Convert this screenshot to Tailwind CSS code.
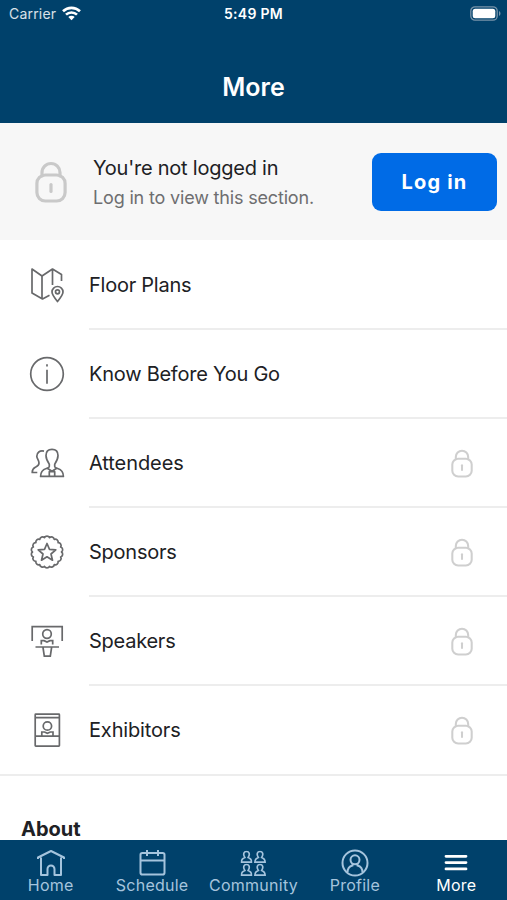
<!DOCTYPE html>
<html lang="en">
<head>
<meta charset="utf-8">
<title>More</title>
<script src="https://cdn.jsdelivr.net/npm/@tailwindcss/browser@4"></script>
</head>
<body class="w-[507px] h-[900px] overflow-hidden bg-white font-[Inter,sans-serif] text-[#202124]">
<svg class="hidden">
  <symbol id="lock" viewBox="0 0 32 42"><path d="M7 15v-3.500a9 9 0 0 1 18 0v3.500" /><rect x="1.900" y="14" width="28.200" height="26" rx="8.500"/><path d="M16 23.500v7"/></symbol>
  <symbol id="member" viewBox="0 0 12 13"><path d="M4.300 7C2 3.600 3.400 1 6 1s4 2.600 1.700 6c2.200.8 3.400 1.800 3.400 4.700H.9C.9 8.800 2.100 7.800 4.300 7z"/></symbol>
</svg>
<div class="flex h-full flex-col">
  <header class="h-[123px] shrink-0 bg-[#00416b] text-white">
    <div class="grid h-7 grid-cols-3 items-center">
      <div class="flex items-center pl-[9px]">
        <span class="-mt-px text-[14px] tracking-[0.2px] text-white/85">Carrier</span>
        <svg class="ml-1.5 -mt-0.5 h-[15px] w-[19px]" viewBox="0 0 19 15" fill="none" stroke="white" stroke-width="2.6"><path d="M1 5.300a12.200 12.200 0 0 1 17 0M4 8.700a7.800 7.800 0 0 1 11 0"/><path d="M9.500 14.300 6.300 11a4.600 4.600 0 0 1 6.400 0z" fill="white" stroke="none"/></svg>
      </div>
      <div class="-mt-px text-center text-[14px] font-semibold tracking-[0.3px]">5:49 PM</div>
      <svg class="mr-[6px] -mt-0.5 h-[15px] w-[31px] justify-self-end" viewBox="0 0 31 15"><rect x=".8" y=".8" width="26.4" height="13.400" rx="4.200" fill="none" stroke="#7894aa" stroke-width="1.300"/><rect x="2.700" y="2.700" width="22.600" height="9.600" rx="2.500" fill="white"/><path d="M29 5c2 1 2 4 0 5z" fill="#7894aa"/></svg>
    </div>
    <h1 class="mt-[40px] text-center text-[25px] leading-[38px] font-semibold">More</h1>
  </header>
  <section class="flex h-[117px] shrink-0 items-center bg-[#f7f7f7] pr-[10px] pl-[35px]">
    <svg class="h-[42px] w-8 text-[#c9c9c9]" fill="none" stroke="currentColor" stroke-width="3.200" stroke-linecap="round"><use href="#lock"/></svg>
    <div class="mt-0.5 ml-[26px] flex-1 whitespace-nowrap">
      <p class="text-[20px] leading-[30px] tracking-[-0.230px]">You're not logged in</p>
      <p class="text-[18px] leading-[30px] tracking-[-0.170px] text-[#6e6e70]">Log in to view this section.</p>
    </div>
    <button class="h-[58px] w-[125px] rounded-[9px] bg-[#006be6] text-[20px] font-bold tracking-[1.200px] text-white">Log in</button>
  </section>
  <main class="h-[600px] shrink-0 overflow-hidden">
    <ul class="border-b-2 border-[#ededed] text-[20px] tracking-[-0.250px]">
      <li class="flex h-[90px] items-center pl-[29px]">
        <svg class="-mt-px size-9 shrink-0" viewBox="0 0 36 36" fill="none" stroke="#68696b" stroke-width="1.700" stroke-linejoin="round"><path d="M20.500 28.300 13.500 32 3 26V2l10 7 10.500-7 9 5.500V14M13 9v23M23.500 2v16"/><path d="M28.500 34.500c-3.500-4.300-5.500-6.800-5.500-9.500a5.500 5.500 0 0 1 11 0c0 2.700-2 5.200-5.500 9.500z"/><circle cx="28.500" cy="24.800" r="2"/></svg>
        <span class="ml-6 flex h-full flex-1 items-center border-b-2 border-[#ededed] pt-px">Floor Plans</span>
      </li>
      <li class="flex h-[89px] items-center pl-[29px]">
        <svg class="-mt-0.5 size-9 shrink-0" viewBox="0 0 36 36" fill="none" stroke="#68696b" stroke-width="1.700"><circle cx="18" cy="18" r="16.300"/><path d="M18 13.800v14M18 8.300v2.300"/></svg>
        <span class="ml-6 flex h-full flex-1 items-center border-b-2 border-[#ededed]">Know Before You Go</span>
      </li>
      <li class="flex h-[89px] items-center pl-[29px]">
        <svg class="size-9 shrink-0" viewBox="0 0 36 36" fill="none" stroke="#68696b" stroke-width="1.700" stroke-linejoin="round"><path d="M20.300 20.500v-2.300C18.400 15.500 17 13.300 17 9.600c0-3.800 2.400-6.200 6-6.200s6 2.400 6 6.200c0 3.700-1.400 5.900-3.300 8.600v2.300c0 1.200 1.100 1.400 3 2 3.800 1.200 5.700 3.200 5.700 7.900H11.600c0-4.700 1.900-6.700 5.700-7.900 1.900-.6 3-.8 3-2z"/><path d="m18.300 22.300 4.700 3 4.700-3M20.300 30.400v-4.700h5.400v4.700M15 5.200C10.700 4.200 7.800 6.600 7.800 10.200c0 2.400 2.200 4.200 2.200 6.800s-1.700 3.200-3.700 4.200C3.900 22.500 3.200 24 3.200 26.500H8.300"/></svg>
        <span class="ml-6 flex h-full flex-1 items-center justify-between border-b-2 border-[#ededed] pr-[34px] tracking-[-0.080px]">Attendees<svg class="mt-px h-[29px] w-[22px] text-[#cfcfcf]" fill="none" stroke="currentColor" stroke-width="3" stroke-linecap="round"><use href="#lock"/></svg></span>
      </li>
      <li class="flex h-[89px] items-center pl-[29px]">
        <svg class="-mt-0.5 size-9 shrink-0" viewBox="0 0 36 36" fill="none" stroke="#68696b" stroke-width="1.700" stroke-linejoin="round"><path id="seal"/><path d="m18 9.500 2.500 5.800 6.300.5-4.800 4.200 1.500 6.200-5.500-3.400-5.500 3.400 1.500-6.200-4.800-4.200 6.300-.5z"/></svg>
        <span class="ml-6 flex h-full flex-1 items-center justify-between border-b-2 border-[#ededed] pr-[34px]">Sponsors<svg class="mt-px h-[29px] w-[22px] text-[#cfcfcf]" fill="none" stroke="currentColor" stroke-width="3" stroke-linecap="round"><use href="#lock"/></svg></span>
      </li>
      <li class="flex h-[89px] items-center pl-[29px]">
        <svg class="size-9 shrink-0" viewBox="0 0 36 36" fill="none" stroke="#68696b" stroke-width="1.700"><path d="M3.200 17V2.600h30V17M6.500 23h23.500M14 23.500l1.300 8.700h6l1.300-8.700"/><circle cx="18" cy="10" r="4.300"/><path d="M12.300 20.500v-3.800h2.800l2.900 1.400 2.900-1.400h2.800v3.800"/></svg>
        <span class="ml-6 flex h-full flex-1 items-center justify-between border-b-2 border-[#ededed] pr-[34px]">Speakers<svg class="mt-px h-[29px] w-[22px] text-[#cfcfcf]" fill="none" stroke="currentColor" stroke-width="3" stroke-linecap="round"><use href="#lock"/></svg></span>
      </li>
      <li class="flex h-[88px] items-center pl-[29px]">
        <svg class="size-9 shrink-0" viewBox="0 0 36 36" fill="none" stroke="#68696b" stroke-width="1.700"><rect x="6.200" y="2.200" width="24.200" height="32" rx=".6"/><path d="M6 5.600h24.500M6 24.200h24.500"/><circle cx="18.400" cy="14" r="4.200"/><path d="M12.800 24v-4h2.700l2.900 1.300 2.900-1.300H24v4"/></svg>
        <span class="ml-6 flex h-full flex-1 items-center justify-between pr-[34px] tracking-[-0.150px]">Exhibitors<svg class="mt-px h-[29px] w-[22px] text-[#cfcfcf]" fill="none" stroke="currentColor" stroke-width="3" stroke-linecap="round"><use href="#lock"/></svg></span>
      </li>
    </ul>
    <h2 class="mt-[39px] pl-[21px] text-[20px] leading-[28px] font-bold">About</h2>
  </main>
  <nav class="grid h-[60px] shrink-0 grid-cols-5 bg-[#00416b] text-[16px] tracking-[0.250px] text-[#a5c4dd]">
    <a class="flex flex-col items-center pt-[9px]"><svg class="size-7" viewBox="0 0 28 28" fill="none" stroke="currentColor" stroke-width="2" stroke-linejoin="round"><path d="M1 10V8.500L14 2l13 6.500V10M4 8.500V26h6.500v-6a3.500 3.500 0 0 1 7 0v6H24V8.500"/></svg><span class="leading-4">Home</span></a>
    <a class="flex flex-col items-center pt-[9px]"><svg class="size-7" viewBox="0 0 28 28" fill="none" stroke="currentColor" stroke-width="2"><rect x="2.500" y="4" width="24" height="21.500" rx="1.800"/><path d="M2.500 11.500h24M9 1v6M20 1v6"/></svg><span class="leading-4">Schedule</span></a>
    <a class="flex flex-col items-center pt-[9px]"><svg class="size-7" viewBox="0 0 28 28" fill="none" stroke="currentColor" stroke-width="1.700"><use href="#member" x="1.500" y="1.500" width="12" height="13"/><use href="#member" x="15" y="1.500" width="12" height="13"/><use href="#member" x="1.500" y="14.500" width="12" height="13"/><use href="#member" x="15" y="14.500" width="12" height="13"/></svg><span class="leading-4">Community</span></a>
    <a class="flex flex-col items-center pt-[9px]"><svg class="size-7" viewBox="0 0 28 28" fill="none" stroke="currentColor" stroke-width="2"><circle cx="14" cy="14" r="12.500"/><circle cx="14" cy="10.800" r="4.500"/><path d="M6.500 23.500c0-4.500 2.200-6.300 5-7v-2M21.500 23.500c0-4.500-2.200-6.300-5-7v-2"/></svg><span class="leading-4">Profile</span></a>
    <a class="flex flex-col items-center pt-[9px] text-white"><svg class="size-7" viewBox="0 0 28 28" fill="none" stroke="currentColor" stroke-width="2.800" stroke-linecap="round"><path d="M4 7.300h20M4 13.600h20M4 19.900h20"/></svg><span class="leading-4">More</span></a>
  </nav>
</div>
<script>
  // Scalloped outline of the sponsor seal
  const lobes = 18, radius = 14.500;
  const point = i => {
    const a = (i + 0.5) * 2 * Math.PI / lobes;
    return (18 + radius * Math.sin(a)).toFixed(2) + ' ' + (18 - radius * Math.cos(a)).toFixed(2);
  };
  let d = 'M' + point(0);
  for (let i = 1; i <= lobes; i++) d += 'A2.800 2.800 0 0 1 ' + point(i);
  document.getElementById('seal').setAttribute('d', d + 'Z');
</script>
</body>
</html>
